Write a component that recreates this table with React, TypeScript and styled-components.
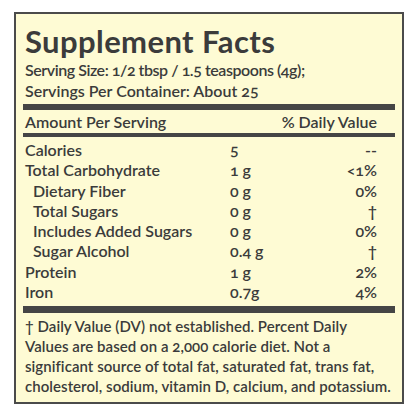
import React from "react";
import styled, { createGlobalStyle } from "styled-components";

const Global = createGlobalStyle`
  html, body { margin: 0; padding: 0; background: #ffffff; }
  body { font-family: Lato, "Open Sans", sans-serif; }
`;

const Label = styled.div`
  box-sizing: border-box;
  margin: 12px 0 0 14px;
  width: 390px;
  height: 392px;
  border: 2px solid #4b4b4b;
  background: #fefbd4;
  padding: 0 7px;
  color: #3b3b3b;
  font-family: Lato, "Open Sans", sans-serif;
  font-weight: 600;
  font-variant-numeric: oldstyle-nums;
`;

const Title = styled.h1`
  margin: 0;
  padding: 9px 0 0 2px;
  font-size: 31px;
  line-height: 36px;
  font-weight: 700;
  letter-spacing: 0.4px;
`;

const Serving = styled.div<{ $tight?: boolean }>`
  padding-left: 2px;
  font-size: 16px;
  line-height: 21px;
  white-space: nowrap;
  letter-spacing: ${(p) => (p.$tight ? "-0.45px" : "0")};
`;

const Bar = styled.div<{ $h: number; $mt: number }>`
  height: ${(p) => p.$h}px;
  margin-top: ${(p) => p.$mt}px;
  background: #454545;
`;

const HeaderRow = styled.div`
  display: flex;
  justify-content: space-between;
  padding: 0 18px 0 2px;
  font-size: 16px;
  line-height: 19px;
  margin-top: 2px;
`;

const Rows = styled.div`
  padding-top: 3px;
`;

const Row = styled.div<{ $indent?: boolean }>`
  display: grid;
  grid-template-columns: ${(p) => (p.$indent ? 197 : 205)}px 1fr auto;
  padding: 0 18px 0 ${(p) => (p.$indent ? 10 : 2)}px;
  font-size: 16px;
  line-height: 20.3px;
  white-space: nowrap;
`;

const Percent = styled.span`
  text-align: right;
`;

const Footnote = styled.p`
  margin: 0;
  padding: 3px 0 0 2px;
  font-size: 15px;
  line-height: 20px;
  letter-spacing: 0.05px;
  white-space: nowrap;
`;

type Item = { name: string; amount: string; dv: string; indent?: boolean };

const items: Item[] = [
  { name: "Calories", amount: "5", dv: "--" },
  { name: "Total Carbohydrate", amount: "1 g", dv: "<1%" },
  { name: "Dietary Fiber", amount: "0 g", dv: "0%", indent: true },
  { name: "Total Sugars", amount: "0 g", dv: "†", indent: true },
  { name: "Includes Added Sugars", amount: "0 g", dv: "0%", indent: true },
  { name: "Sugar Alcohol", amount: "0.4 g", dv: "†", indent: true },
  { name: "Protein", amount: "1 g", dv: "2%" },
  { name: "Iron", amount: "0.7g", dv: "4%" },
];

export default function App() {
  return (
    <>
      <Global />
      <Label>
        <Title>Supplement Facts</Title>
        <Serving $tight>Serving Size: 1/2 tbsp / 1.5 teaspoons (4g);</Serving>
        <Serving>Servings Per Container: About 25</Serving>
        <Bar $h={6} $mt={3} />
        <HeaderRow>
          <span>Amount Per Serving</span>
          <span>% Daily Value</span>
        </HeaderRow>
        <Bar $h={4} $mt={2} />
        <Rows>
          {items.map((it) => (
            <Row key={it.name} $indent={it.indent}>
              <span>{it.name}</span>
              <span>{it.amount}</span>
              <Percent>{it.dv}</Percent>
            </Row>
          ))}
        </Rows>
        <Bar $h={7} $mt={4} />
        <Footnote>
          † Daily Value (DV) not established. Percent Daily
          <br />
          Values are based on a 2,000 calorie diet. Not a
          <br />
          significant source of total fat, saturated fat, trans fat,
          <br />
          cholesterol, sodium, vitamin D, calcium, and potassium.
        </Footnote>
      </Label>
    </>
  );
}
